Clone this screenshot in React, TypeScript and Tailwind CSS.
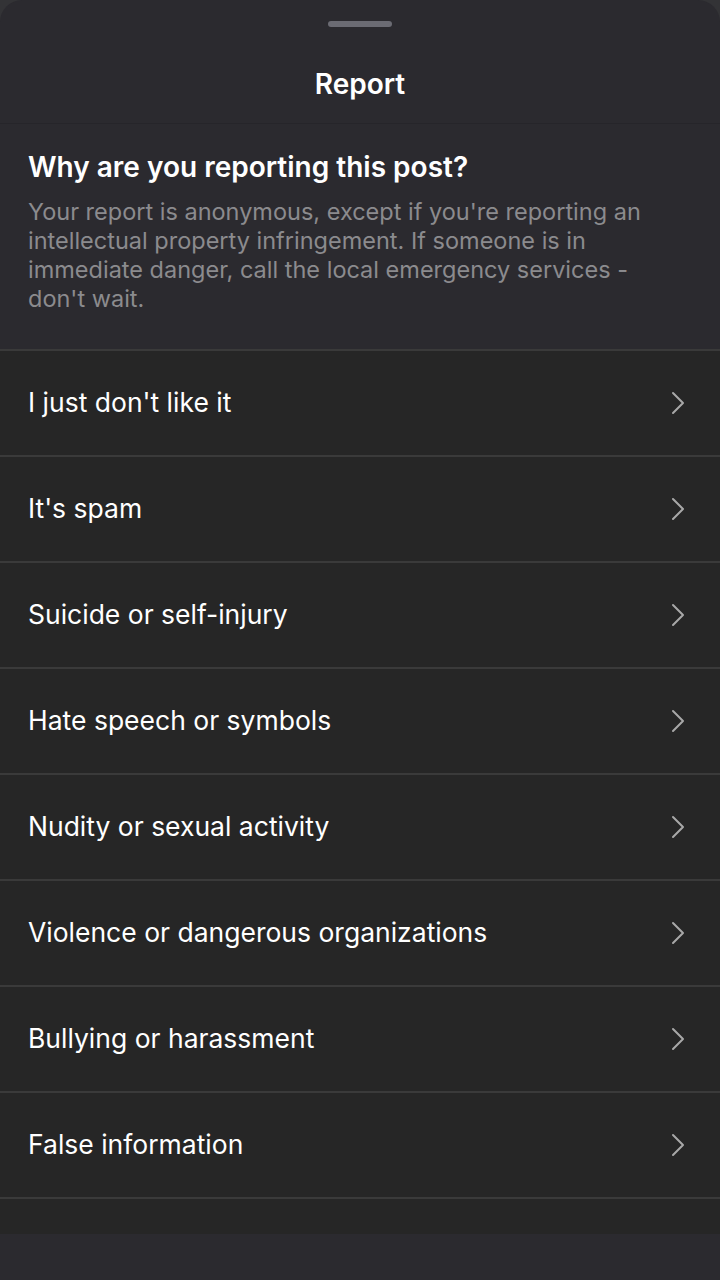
import React from "react";

const items = [
  "I just don't like it",
  "It's spam",
  "Suicide or self-injury",
  "Hate speech or symbols",
  "Nudity or sexual activity",
  "Violence or dangerous organizations",
  "Bullying or harassment",
  "False information",
];

function Chevron() {
  return (
    <svg width="16" height="24" viewBox="0 0 16 24" fill="none">
      <path d="M3 2 L13 12 L3 22" stroke="#a8a8a8" strokeWidth="2" strokeLinecap="round" strokeLinejoin="round" />
    </svg>
  );
}

export default function App() {
  return (
    <div className="w-[720px] h-[1280px] bg-[#333336] overflow-hidden" style={{ fontFamily: "Inter, 'Noto Sans', sans-serif" }}>
      <div className="h-full bg-[#2b2a2f] rounded-t-[22px] flex flex-col">
        <div className="h-[124px] flex flex-col items-center border-b border-[#26252a]">
          <div className="mt-[21px] w-[64px] h-[6px] rounded-full bg-[#6b6b73]" />
          <div className="mt-[43px] text-[28px] font-semibold text-white leading-none">Report</div>
        </div>
        <div className="px-[28px] pt-[26px] h-[225px]">
          <div className="text-[28px] font-semibold text-white leading-[34px]">Why are you reporting this post?</div>
          <div className="mt-[13px] max-w-[628px] text-[23.5px] text-[#8b8b8e] leading-[29px]">
            Your report is anonymous, except if you're reporting an intellectual property infringement. If someone is in immediate danger, call the local emergency services - don't wait.
          </div>
        </div>
        <div className="bg-[#262626] border-t-2 border-[#3a3a3a]">
          {items.map((t) => (
            <div key={t} className="h-[106px] flex items-center justify-between pl-[28px] pr-[34px] border-b-2 border-[#3a3a3a]">
              <span className="text-[26.5px] text-white">{t}</span>
              <Chevron />
            </div>
          ))}
          <div className="h-[35px]" />
        </div>
      </div>
    </div>
  );
}
